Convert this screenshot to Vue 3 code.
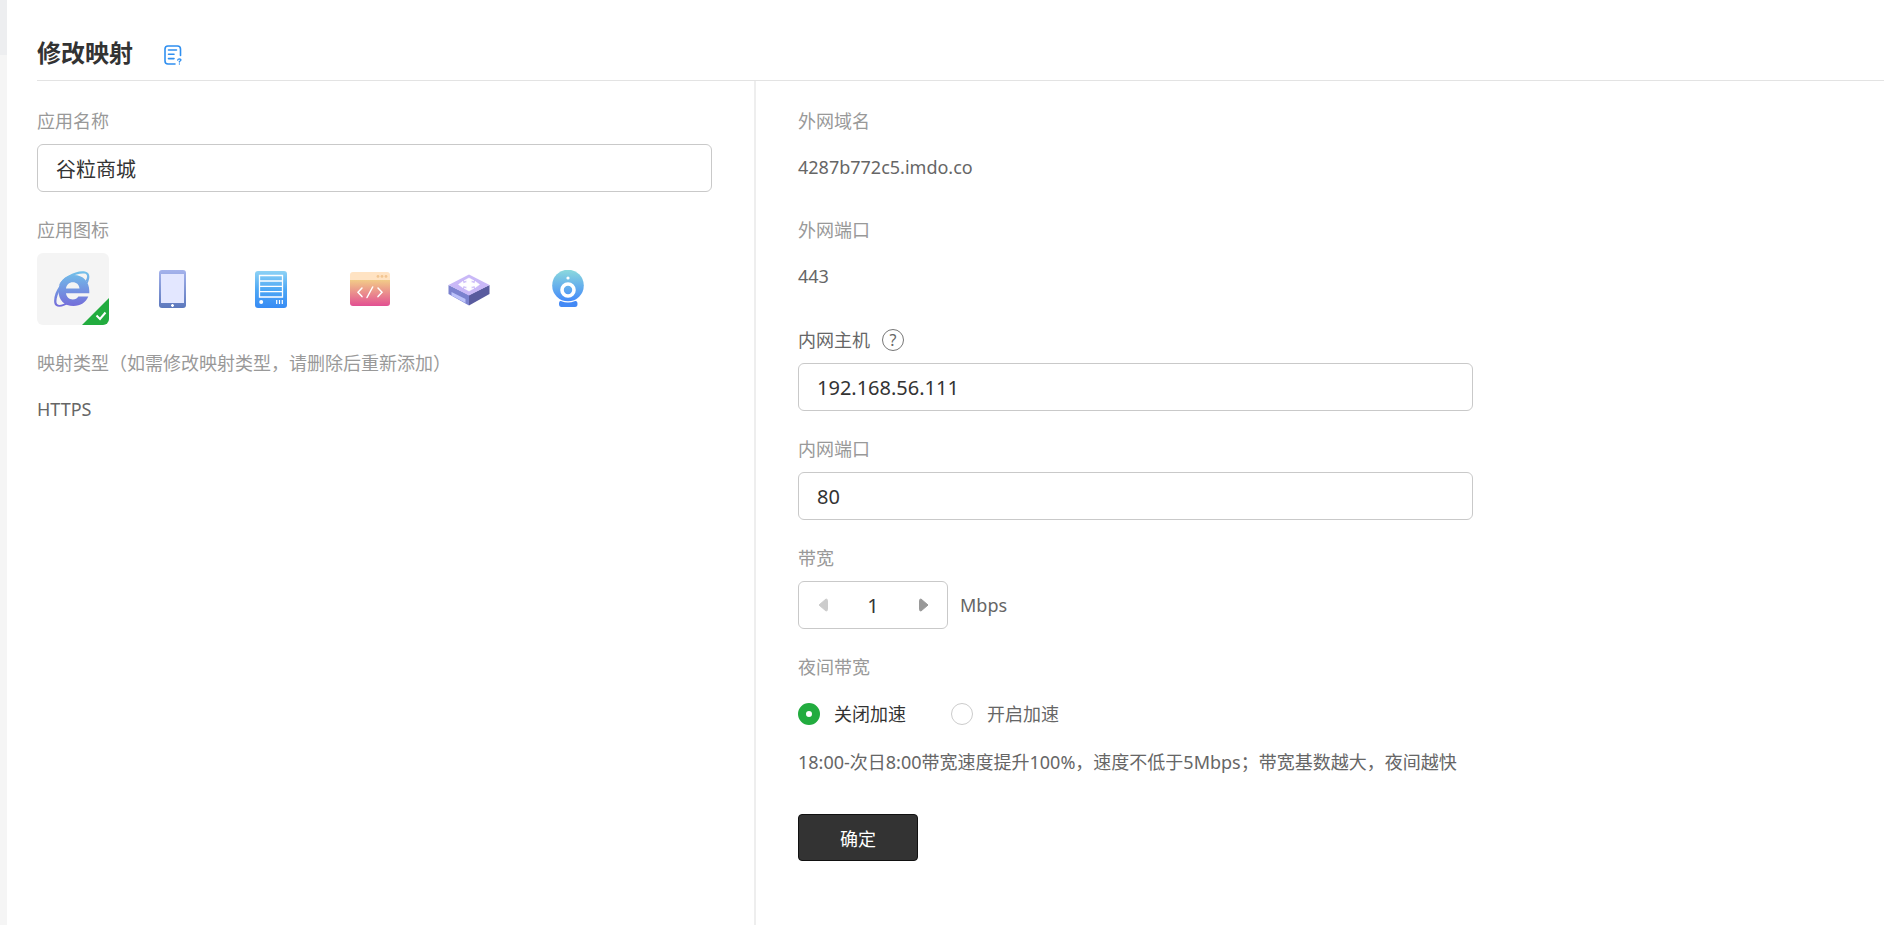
<script setup>
import { ref } from 'vue'

const appName = ref('谷粒商城')
const host = ref('192.168.56.111')
const port = ref('80')
const bandwidth = ref(1)
const night = ref('off')
const icon = ref('browser')
const icons = [
  { id: 'browser', name: '浏览器' },
  { id: 'tablet', name: '移动设备' },
  { id: 'server', name: '服务器' },
  { id: 'code', name: '网页' },
  { id: 'router', name: '路由器' },
  { id: 'camera', name: '摄像头' },
]
</script>

<template>
  <div class="page">
    <aside class="rail"><div class="rail-top"></div></aside>
    <main class="main">
      <header class="head">
        <h1>修改映射</h1>
        <button class="doc" type="button" aria-label="帮助文档">
          <svg width="18" height="20" viewBox="0 0 18 20" fill="none" stroke="#2f8ff0" stroke-width="1.6" stroke-linecap="round">
            <path d="M16.5 10.500V4Q16.5 1 13.5 1H4Q1 1 1 4V16Q1 19 4 19H11" />
            <path d="M4.5 5H12.500M4.5 9.300H10M4.500 13.600H10" />
            <path d="M13.700 15Q13.900 13.900 15.400 13.900Q17 14 16.900 15.100Q16.700 16 15.400 16.300V17M15.400 19V19.100" stroke-width="1.300" />
          </svg>
        </button>
      </header>

      <form class="cols" @submit.prevent>
        <section class="col left">
          <label class="label" for="app-name">应用名称</label>
          <input id="app-name" v-model="appName" class="box" type="text" />

          <div class="label">应用图标</div>
          <div class="icons">
            <button
              v-for="i in icons"
              :key="i.id"
              type="button"
              class="tile"
              :class="{ on: icon === i.id }"
              :aria-label="i.name"
              :aria-pressed="icon === i.id"
              @click="icon = i.id"
            >
              <svg v-if="i.id === 'browser'" width="38" height="36" viewBox="0 0 38 36">
                <defs>
                  <linearGradient id="gb" gradientUnits="userSpaceOnUse" x1="0" y1="0" x2="0" y2="36">
                    <stop offset="0" stop-color="#72c2ea" /><stop offset="1" stop-color="#746bd9" />
                  </linearGradient>
                </defs>
                <path fill="url(#gb)" fill-rule="evenodd" d="M35.300 22.300H12C12.400 26 15 28.500 18.800 28.500C21.400 28.500 23.100 27.500 24.400 25.600H34.300C32 31.500 26.500 35 19.500 35C10.500 35 4.500 29 4.500 20S10.500 4 19.800 4S35.300 10.500 35.300 20ZM12 17.600H25.500C25 13.500 22.500 11.300 18.800 11.300S12.400 13.800 12 17.600Z" />
                <path fill="url(#gb)" d="M4.500 14.500C9 6 22 -1 31 .500C36 1.500 36.500 6 33.500 12.500L31.800 9.500C33.800 5.500 33.500 3 30.500 2.500C23 1.500 11 7.500 4.500 14.500Z" />
                <path fill="url(#gb)" d="M6 14.500C1.500 20 -.500 27 .300 32C1.200 37.500 9 36.500 16.500 31.500L13 31C7.500 34.500 3 35 2.500 31.500C2 28 4 22 6.500 18Z" />
              </svg>
              <svg v-else-if="i.id === 'tablet'" width="28" height="38" viewBox="0 0 28 38">
                <defs>
                  <linearGradient id="gt" x1="0" y1="0" x2="0" y2="1">
                    <stop offset="0" stop-color="#a5b3ec" /><stop offset="1" stop-color="#5c78bd" />
                  </linearGradient>
                </defs>
                <rect x="1" width="27" height="38" rx="3" fill="url(#gt)" />
                <rect x="3" y="4" width="23" height="29" fill="#e3e7ff" />
                <path d="M14.500 34V37M13 35.500H16" stroke="#fff" stroke-width="1.400" />
              </svg>
              <svg v-else-if="i.id === 'server'" width="32" height="37" viewBox="0 0 32 37">
                <defs>
                  <linearGradient id="gs" x1="0" y1="0" x2="0" y2="1">
                    <stop offset="0" stop-color="#8dd2f5" /><stop offset=".5" stop-color="#4ea8f5" /><stop offset="1" stop-color="#378bf4" />
                  </linearGradient>
                </defs>
                <rect width="32" height="37" rx="3" fill="url(#gs)" />
                <path d="M4.500 4.500H27.500V26H4.500ZM4.500 10H27.500M4.500 15.300H27.500M4.500 20.600H27.500" fill="none" stroke="#fff" stroke-width="1.300" />
                <circle cx="6.200" cy="31" r="2" fill="#fff" />
                <path d="M21.700 29V33M24.500 29V33M27.300 29V33" stroke="#fff" stroke-width="1.200" />
              </svg>
              <svg v-else-if="i.id === 'code'" width="40" height="34" viewBox="0 0 40 34">
                <defs>
                  <linearGradient id="gc" x1="0" y1="0" x2="0" y2="1">
                    <stop offset="0" stop-color="#f2cb87" /><stop offset="1" stop-color="#e24f92" />
                  </linearGradient>
                </defs>
                <path d="M0 8H40V31Q40 34 37 34H3Q0 34 0 31Z" fill="url(#gc)" />
                <path d="M3 0H37Q40 0 40 3V8H0V3Q0 0 3 0Z" fill="#ffe3c3" />
                <g fill="#f2c591"><circle cx="28" cy="4.400" r="1.400" /><circle cx="32" cy="4.400" r="1.400" /><circle cx="36" cy="4.400" r="1.400" /></g>
                <path d="M12 16L8 20.300L12 24.600M28 16L32 20.300L28 24.600M22.700 15L17 25.500" fill="none" stroke="#fff" stroke-width="1.500" stroke-linecap="round" />
              </svg>
              <svg v-else-if="i.id === 'router'" width="42" height="34" viewBox="0 -2 42 34">
                <path d="M.500 11L21 21V31.500L.500 20Z" fill="#7b82cf" />
                <path d="M41.500 11L21 21V31.500L41.500 20Z" fill="#595b9e" />
                <path d="M21 .500L41.500 11L21 21.500L.500 11Z" fill="#c9b8f7" />
                <path d="M3.500 18V21.500L17.500 29V25Z" fill="#bcc2fa" />
                <path d="M21 4L26 6.800H23.300V8.300Q25.500 9.300 27 9.300V7.300L31.500 10.500L27 13.700V11.900Q25.500 11.900 23.300 12.700V14.200H26L21 17L16 14.200H18.700V12.700Q16.500 11.900 15 11.900V13.700L10.500 10.500L15 7.300V9.300Q16.500 9.300 18.700 8.300V6.800H16Z" fill="#fff" stroke="#fff" stroke-width=".6" />
              </svg>
              <svg v-else width="32" height="38" viewBox="0 0 32 38">
                <defs>
                  <linearGradient id="gw" gradientUnits="userSpaceOnUse" x1="0" y1="0" x2="0" y2="32">
                    <stop offset="0" stop-color="#8bd9dd" /><stop offset="1" stop-color="#4389fa" />
                  </linearGradient>
                </defs>
                <path d="M8.500 31H23.500Q25.500 31 25.500 34Q25.500 37 23 37H9.500Q7 37 7 34Q7 31 8.500 31Z" fill="#4389f5" />
                <circle cx="16" cy="15.500" r="17" fill="#fff" />
                <circle cx="16" cy="15.500" r="15.800" fill="url(#gw)" />
                <circle cx="16" cy="8" r="1.600" fill="#fff" />
                <circle cx="16" cy="20" r="6" fill="none" stroke="#fff" stroke-width="3.600" />
              </svg>
              <span v-if="icon === i.id" class="badge">
                <svg width="27" height="27" viewBox="0 0 27 27">
                  <path d="M27 0V27H0Z" fill="#22ac3f" />
                  <path d="M14.500 17.500L18 21L23.500 14.500" fill="none" stroke="#fff" stroke-width="2" />
                </svg>
              </span>
            </button>
          </div>

          <div class="label">映射类型（如需修改映射类型，请删除后重新添加）</div>
          <div class="value">HTTPS</div>
        </section>

        <section class="col right">
          <div class="label">外网域名</div>
          <div class="value">4287b772c5.imdo.co</div>

          <div class="label">外网端口</div>
          <div class="value">443</div>

          <div class="label label-help">
            <label for="host">内网主机</label>
            <button type="button" class="help" aria-label="内网主机说明">?</button>
          </div>
          <input id="host" v-model="host" class="box" type="text" />

          <label class="label" for="port">内网端口</label>
          <input id="port" v-model="port" class="box" type="text" />

          <label class="label" for="bandwidth">带宽</label>
          <div class="band">
            <div class="stepper">
              <button type="button" aria-label="减少" :disabled="bandwidth <= 1" @click="bandwidth--">
                <svg width="10" height="14" viewBox="0 0 10 14"><path d="M8 1L1 7L8 13Q9.500 13 9.500 11.500V2.500Q9.500 1 8 1Z" fill="currentColor" stroke="currentColor" stroke-linejoin="round" /></svg>
              </button>
              <input id="bandwidth" v-model.number="bandwidth" type="text" />
              <button type="button" aria-label="增加" @click="bandwidth++">
                <svg width="10" height="14" viewBox="0 0 10 14"><path d="M2 1L9 7L2 13Q.500 13 .500 11.500V2.500Q.500 1 2 1Z" fill="currentColor" stroke="currentColor" stroke-linejoin="round" /></svg>
              </button>
            </div>
            <span>Mbps</span>
          </div>

          <div class="label">夜间带宽</div>
          <div class="radios">
            <label><input v-model="night" type="radio" name="night" value="off" />关闭加速</label>
            <label><input v-model="night" type="radio" name="night" value="on" />开启加速</label>
          </div>
          <p class="note">18:00-次日8:00带宽速度提升100%，速度不低于5Mbps；带宽基数越大，夜间越快</p>

          <button class="submit" type="submit">确定</button>
        </section>
      </form>
    </main>
  </div>
</template>

<style>
body {
  background: #fff;
}
</style>

<style scoped>
.page,
.page * {
  box-sizing: border-box;
}
.page {
  display: flex;
  min-height: 100vh;
  background: #fff;
  color: #666;
  font-family: "Noto Sans", "Noto Sans CJK SC", sans-serif;
  font-size: 18px;
}
button,
input {
  margin: 0;
  padding: 0;
  border: 0;
  background: none;
  color: inherit;
  font: inherit;
}
button {
  cursor: pointer;
}
svg {
  display: block;
}
.rail {
  flex: 0 0 7px;
  background: #f5f5f5;
}
.rail-top {
  height: 55px;
  background: #edeef0;
}
.main {
  flex: 1;
  min-width: 0;
  display: flex;
  flex-direction: column;
  padding-left: 30px;
}
.head {
  display: flex;
  align-items: center;
  gap: 31px;
  height: 81px;
  padding-top: 26px;
  border-bottom: 1px solid #e3e3e3;
}
.doc {
  padding-top: 4px;
}
h1 {
  margin: 0;
  color: #333;
  font-size: 24px;
  line-height: 54px;
}
.cols {
  flex: 1;
  display: grid;
  grid-template-columns: minmax(360px, 719px) minmax(0, 1fr);
}
.col {
  padding: 2px 42px 40px 0;
}
.left {
  border-right: 2px solid #eee;
}
.right {
  padding-left: 42px;
}
.label {
  display: block;
  margin: 26px 0 10px;
  color: #999;
  line-height: 25px;
}
.label-help {
  display: flex;
  align-items: center;
  gap: 12px;
  height: 26px;
  color: #666;
}
.help {
  width: 22px;
  height: 22px;
  border: 1px solid #777;
  border-radius: 50%;
  font-size: 16px;
  line-height: 20px;
}
.box {
  display: block;
  width: 100%;
  max-width: 675px;
  height: 48px;
  padding: 0 18px;
  border: 1px solid #c9c9c9;
  border-radius: 6px;
  color: #333;
  font-size: 20px;
}
.value {
  height: 48px;
  line-height: 46px;
}
.icons {
  display: flex;
  flex-wrap: wrap;
  gap: 27px;
}
.tile {
  position: relative;
  display: flex;
  align-items: center;
  justify-content: center;
  width: 72px;
  height: 72px;
  border-radius: 6px;
  overflow: hidden;
}
.tile.on {
  background: #f4f4f4;
}
.badge {
  position: absolute;
  right: 0;
  bottom: 0;
}
.band {
  display: flex;
  align-items: center;
  gap: 12px;
}
.stepper {
  display: flex;
  width: 150px;
  height: 48px;
  border: 1px solid #c9c9c9;
  border-radius: 6px;
}
.stepper button {
  display: flex;
  align-items: center;
  justify-content: center;
  flex: 0 0 47px;
  color: #999;
}
.stepper button:disabled {
  color: #ccc;
}
.stepper input {
  flex: 1;
  min-width: 0;
  color: #333;
  font-size: 20px;
  text-align: center;
}
.radios {
  display: flex;
  gap: 45px;
  line-height: 48px;
}
.radios label {
  display: flex;
  align-items: center;
  gap: 14px;
}
.radios label:has(:checked) {
  color: #333;
}
.radios input {
  appearance: none;
  width: 22px;
  height: 22px;
  border: 1px solid #ccc;
  border-radius: 50%;
}
.radios input:checked {
  border: 8px solid #22ac3f;
}
.note {
  margin: 0 0 28px;
  line-height: 48px;
}
.submit {
  width: 120px;
  height: 47px;
  border: 1px solid #111;
  border-radius: 4px;
  background: #333;
  color: #fff;
}
</style>
